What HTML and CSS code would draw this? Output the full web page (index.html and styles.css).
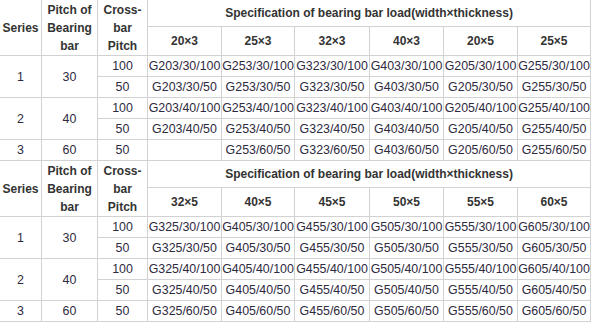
FILE: index.html
```html
<!DOCTYPE html>
<html lang="en">
<head>
  <meta charset="UTF-8">
  <title>Bearing bar load</title>
  <link rel="stylesheet" href="styles.css">
</head>
<body>
  <table class="spec">
    <colgroup>
      <col class="c-series"><col class="c-pitch"><col class="c-cross">
      <col class="c1"><col class="c2"><col class="c3"><col class="c4"><col class="c5"><col class="c6">
    </colgroup>
    <tbody>
      <tr class="head-top">
        <th rowspan="2">Series</th>
        <th rowspan="2">Pitch of<br>Bearing<br>bar</th>
        <th rowspan="2">Cross-<br>bar<br>Pitch</th>
        <th colspan="6">Specification of bearing bar load(width×thickness)</th>
      </tr>
      <tr class="head-size">
        <th>20×3</th><th>25×3</th><th>32×3</th><th>40×3</th><th>20×5</th><th>25×5</th>
      </tr>
      <tr>
        <td rowspan="2">1</td><td rowspan="2">30</td><td>100</td>
        <td>G203/30/100</td><td>G253/30/100</td><td>G323/30/100</td><td>G403/30/100</td><td>G205/30/100</td><td>G255/30/100</td>
      </tr>
      <tr>
        <td>50</td>
        <td>G203/30/50</td><td>G253/30/50</td><td>G323/30/50</td><td>G403/30/50</td><td>G205/30/50</td><td>G255/30/50</td>
      </tr>
      <tr>
        <td rowspan="2">2</td><td rowspan="2">40</td><td>100</td>
        <td>G203/40/100</td><td>G253/40/100</td><td>G323/40/100</td><td>G403/40/100</td><td>G205/40/100</td><td>G255/40/100</td>
      </tr>
      <tr>
        <td>50</td>
        <td>G203/40/50</td><td>G253/40/50</td><td>G323/40/50</td><td>G403/40/50</td><td>G205/40/50</td><td>G255/40/50</td>
      </tr>
      <tr>
        <td>3</td><td>60</td><td>50</td>
        <td></td><td>G253/60/50</td><td>G323/60/50</td><td>G403/60/50</td><td>G205/60/50</td><td>G255/60/50</td>
      </tr>
    </tbody>
    <tbody>
      <tr class="head-top">
        <th rowspan="2">Series</th>
        <th rowspan="2">Pitch of<br>Bearing<br>bar</th>
        <th rowspan="2">Cross-<br>bar<br>Pitch</th>
        <th colspan="6">Specification of bearing bar load(width×thickness)</th>
      </tr>
      <tr class="head-size">
        <th>32×5</th><th>40×5</th><th>45×5</th><th>50×5</th><th>55×5</th><th>60×5</th>
      </tr>
      <tr>
        <td rowspan="2">1</td><td rowspan="2">30</td><td>100</td>
        <td>G325/30/100</td><td>G405/30/100</td><td>G455/30/100</td><td>G505/30/100</td><td>G555/30/100</td><td>G605/30/100</td>
      </tr>
      <tr>
        <td>50</td>
        <td>G325/30/50</td><td>G405/30/50</td><td>G455/30/50</td><td>G505/30/50</td><td>G555/30/50</td><td>G605/30/50</td>
      </tr>
      <tr>
        <td rowspan="2">2</td><td rowspan="2">40</td><td>100</td>
        <td>G325/40/100</td><td>G405/40/100</td><td>G455/40/100</td><td>G505/40/100</td><td>G555/40/100</td><td>G605/40/100</td>
      </tr>
      <tr>
        <td>50</td>
        <td>G325/40/50</td><td>G405/40/50</td><td>G455/40/50</td><td>G505/40/50</td><td>G555/40/50</td><td>G605/40/50</td>
      </tr>
      <tr>
        <td>3</td><td>60</td><td>50</td>
        <td>G325/60/50</td><td>G405/60/50</td><td>G455/60/50</td><td>G505/60/50</td><td>G555/60/50</td><td>G605/60/50</td>
      </tr>
    </tbody>
  </table>
</body>
</html>
```

FILE: styles.css
```css
body { margin: 0; background: #fff; font-family: "Liberation Sans", Arial, sans-serif; }
.spec { border-collapse: collapse; table-layout: fixed; width: 591px; margin: -1px 0 0 -1px; }
.spec th, .spec td { border: 1px solid #d2d2d2; padding: 0; text-align: center; vertical-align: middle; white-space: nowrap; }
.spec th { font-size: 12px; font-weight: bold; color: #333; line-height: 18px; }
.spec td { font-size: 12.4px; color: #2e2a40; line-height: 20px; height: 20px; }
.head-top th { height: 26px; }
.head-size th { height: 28px; }
.c-series { width: 42px; }
.c-pitch { width: 56px; }
.c-cross { width: 50px; }
.c1 { width: 74px; }
.c2 { width: 73px; }
.c3 { width: 75px; }
.c4 { width: 74px; }
.c5 { width: 74px; }
.c6 { width: 73px; }
```
